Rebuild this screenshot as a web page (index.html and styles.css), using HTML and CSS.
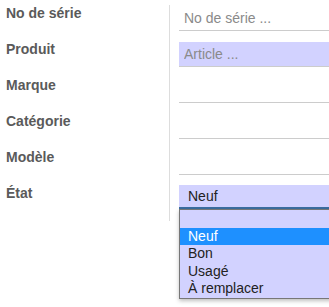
FILE: index.html
```html
<!DOCTYPE html>
<html lang="fr">
<head>
    <meta charset="UTF-8">
    <title>Fiche article</title>
    <link rel="stylesheet" href="styles.css">
</head>
<body>
    <div class="form-sheet">
        <div class="form-grid">
            <div class="form-label">No de série</div>
            <div class="form-field">
                <input type="text" class="field-input" placeholder="No de série ...">
            </div>

            <div class="form-label">Produit</div>
            <div class="form-field">
                <input type="text" class="field-input required" placeholder="Article ...">
            </div>

            <div class="form-label">Marque</div>
            <div class="form-field">
                <input type="text" class="field-input">
            </div>

            <div class="form-label">Catégorie</div>
            <div class="form-field">
                <input type="text" class="field-input">
            </div>

            <div class="form-label">Modèle</div>
            <div class="form-field">
                <input type="text" class="field-input">
            </div>

            <div class="form-label">État</div>
            <div class="form-field">
                <div class="select-box">
                    <div class="select-value">Neuf</div>
                    <ul class="select-menu">
                        <li class="select-option">&nbsp;</li>
                        <li class="select-option selected">Neuf</li>
                        <li class="select-option">Bon</li>
                        <li class="select-option">Usagé</li>
                        <li class="select-option">À remplacer</li>
                    </ul>
                </div>
            </div>
        </div>
    </div>
</body>
</html>
```

FILE: styles.css
```css
/* Palette */
:root {
    --label: #5a5a5a;
    --line: #cccccc;
    --divider: #dddddd;
    --required: #d2d2ff;
    --highlight: #1e90ff;
    --select-line: #3b6ea0;
}

body {
    margin: 0;
    font-family: 'Liberation Sans', Arial, sans-serif;
    font-size: 14px;
    background: #ffffff;
}

/* Sheet clips the open list on the right, like the window edge */
.form-sheet {
    height: 307px;
    padding-top: 5px;
    box-sizing: border-box;
    overflow: hidden;
}

/* Two columns: labels | fields */
.form-grid {
    display: grid;
    grid-template-columns: 170px 1fr;
    grid-auto-rows: 36px;
}

.form-label {
    padding-left: 6px;
    padding-top: 1px;
    border-right: 1px solid var(--divider);
    color: var(--label);
    font-weight: 700;
    line-height: 14px;
}

.form-field {
    padding-left: 9px;
    padding-top: 1px;
}

.field-input {
    display: block;
    width: 100%;
    height: 25px;
    box-sizing: border-box;
    margin: 0;
    padding: 0 5px;
    border: none;
    border-bottom: 1px solid var(--line);
    background: transparent;
    font-family: inherit;
    font-size: 14px;
    color: #333;
    outline: none;
}

.field-input::placeholder {
    color: #8a8a8a;
    opacity: 1;
}

.field-input.required {
    background: var(--required);
}

/* Select with its open list */
.select-box {
    position: relative;
    margin-top: -1px;
}

.select-value {
    height: 22px;
    line-height: 22px;
    padding-left: 9px;
    background: var(--required);
    border-bottom: 2px solid var(--select-line);
    color: #222;
}

.select-menu {
    position: absolute;
    top: 24px;
    left: 0;
    right: -6px;
    margin: 0;
    padding: 0;
    list-style: none;
    background: var(--required);
    border: 1px solid #777;
    box-shadow: 0 2px 4px rgba(0, 0, 0, 0.25);
    z-index: 2;
}

.select-option {
    height: 17.6px;
    line-height: 17.6px;
    padding-left: 8px;
    color: #222;
}

.select-option.selected {
    background: var(--highlight);
    color: #ffffff;
}
```
